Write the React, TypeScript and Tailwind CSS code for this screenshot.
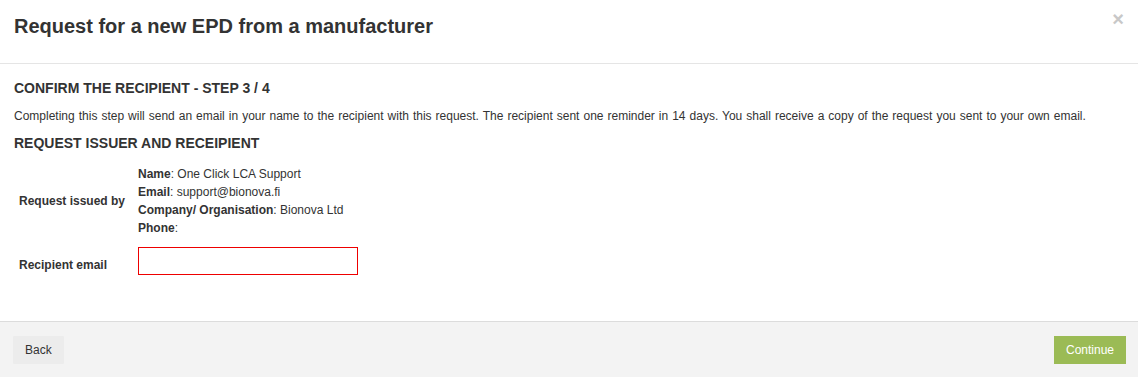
import React from 'react';

const App: React.FC = () => {
  return (
    <div className="w-[1138px] h-[377px] bg-white flex flex-col font-['Liberation_Sans',Arial,sans-serif] text-[#333]">
      <div className="h-[64px] border-b border-[#e5e5e5] px-[14px] pt-[15px] flex items-start justify-between">
        <h3 className="text-[20px] leading-[22px] font-bold text-[#333]">Request for a new EPD from a manufacturer</h3>
        <span className="text-[#c8c8c8] text-[20px] leading-[20px] font-bold -mt-[6px]">×</span>
      </div>

      <div className="flex-1 px-[14px] pt-[15px]">
        <h4 className="text-[14px] leading-[18px] font-bold uppercase">Confirm the recipient - Step 3 / 4</h4>
        <p className="text-[12px] leading-[18px] mt-[10px] [word-spacing:0.67px]">
          Completing this step will send an email in your name to the recipient with this request. The recipient sent one reminder in 14 days. You shall receive a copy of the request you sent to your own email.
        </p>
        <h4 className="text-[14px] leading-[18px] font-bold uppercase mt-[9px]">Request issuer and receipient</h4>

        <div className="mt-[13px] grid grid-cols-[124px_1fr] text-[12px] leading-[18px]">
          <div className="pl-[5px] font-bold self-center">Request issued by</div>
          <div>
            <div><b>Name</b>: One Click LCA Support</div>
            <div><b>Email</b>: support@bionova.fi</div>
            <div><b>Company/ Organisation</b>: Bionova Ltd</div>
            <div><b>Phone</b>:</div>
          </div>
          <div className="pl-[5px] font-bold mt-[19px]">Recipient email</div>
          <div className="mt-[10px]">
            <input type="text" className="w-[220px] h-[28px] border border-[#e00] bg-white outline-none px-2 text-[12px]" />
          </div>
        </div>
      </div>

      <div className="h-[56px] border-t border-[#dcdcdc] bg-[#f3f3f3] pl-[13px] pr-[12px] flex items-center justify-between">
        <button className="h-[28px] px-[12px] bg-[#ececec] text-[#333] text-[12px] rounded-[1px]">Back</button>
        <button className="h-[28px] w-[72px] bg-[#9bbb55] text-white text-[12px]">Continue</button>
      </div>
    </div>
  );
};

export default App;
